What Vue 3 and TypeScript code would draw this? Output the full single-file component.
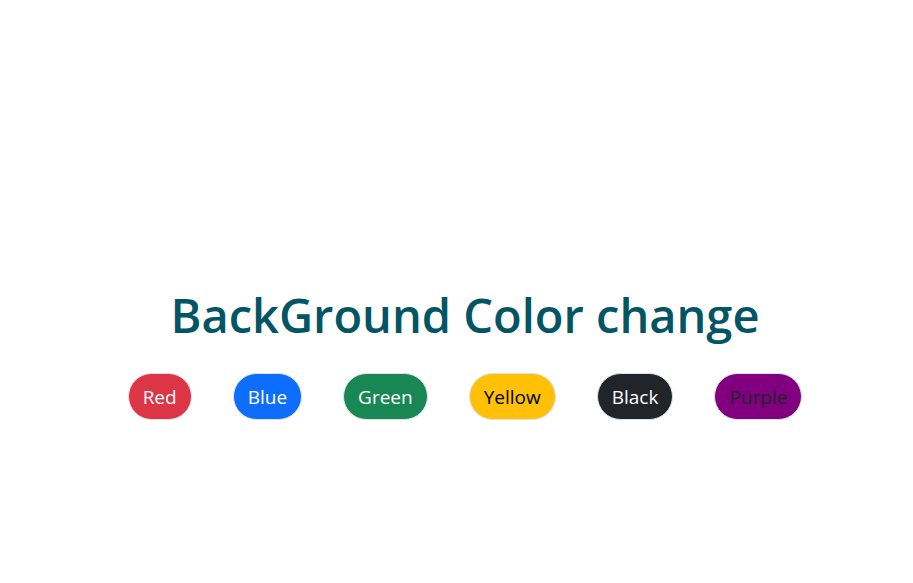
<script setup lang="ts">
import { ref } from 'vue'

interface Swatch {
  label: string
  tone: string
  color: string
}

const swatches: Swatch[] = [
  { label: 'Red', tone: 'red', color: '#dc3545' },
  { label: 'Blue', tone: 'blue', color: '#0d6efd' },
  { label: 'Green', tone: 'green', color: '#198754' },
  { label: 'Yellow', tone: 'yellow', color: '#ffc107' },
  { label: 'Black', tone: 'black', color: '#212529' },
  { label: 'Purple', tone: 'purple', color: '#800080' },
]

const background = ref('#ffffff')
</script>

<template>
  <main class="page" :style="{ backgroundColor: background }">
    <h1 class="title">BackGround Color change</h1>
    <div class="buttons">
      <button
        v-for="s in swatches"
        :key="s.tone"
        type="button"
        class="btn"
        :class="s.tone"
        @click="background = s.color"
      >
        {{ s.label }}
      </button>
    </div>
  </main>
</template>

<style>
body {
  margin: 0;
  background: #fff;
}
</style>

<style scoped>
.page {
  box-sizing: border-box;
  min-height: 100vh;
  padding: 284px 0 0 17px;
  display: flex;
  flex-direction: column;
  align-items: center;
  font-family: 'Segoe UI', 'Open Sans', 'Noto Sans', sans-serif;
}

.title {
  margin: 0;
  color: #035565;
  font-size: 47px;
  line-height: 62px;
  font-weight: 600;
}

.buttons {
  display: flex;
  gap: 41px;
  margin-top: 27px;
}

.btn {
  box-sizing: border-box;
  height: 47px;
  padding: 0 14px;
  border: 1px solid #dee2e6;
  border-radius: 24px;
  font: 400 19px/30px 'Segoe UI', 'Open Sans', 'Noto Sans', sans-serif;
  color: #fff;
  cursor: pointer;
}

.red { background: #dc3545; }
.blue { background: #0d6efd; }
.green { background: #198754; }
.yellow { background: #ffc107; color: #000; }
.black { background: #212529; }
.purple { background: #800080; color: #212529; }
</style>
